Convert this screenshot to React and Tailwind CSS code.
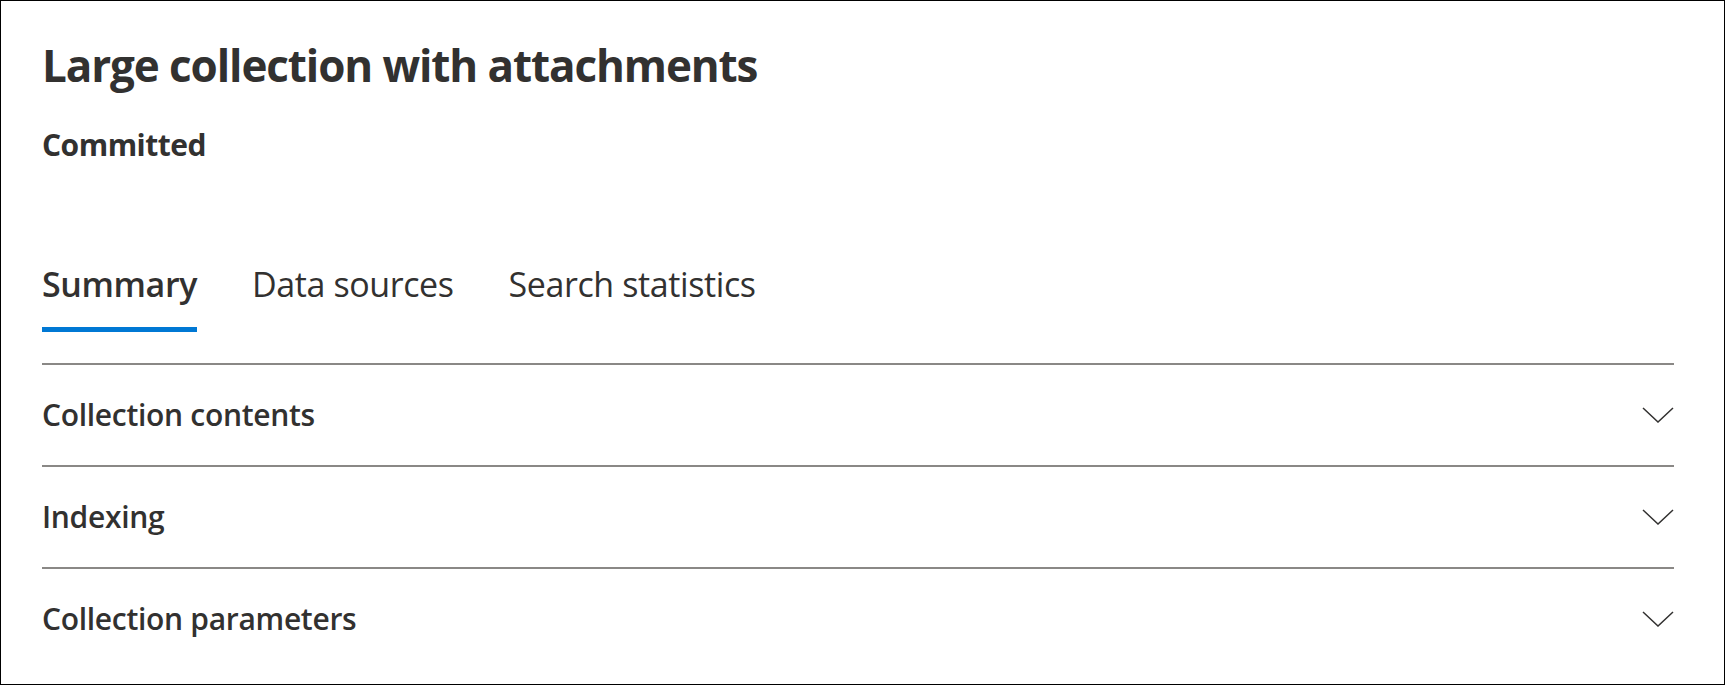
const font = { fontFamily: '"Open Sans", "Noto Sans", sans-serif' };

const tabs = [
  { label: 'Summary', active: true },
  { label: 'Data sources' },
  { label: 'Search statistics' },
];

const sections = ['Collection contents', 'Indexing', 'Collection parameters'];

function Chevron() {
  return (
    <svg width="32" height="16" viewBox="0 0 32 16" fill="none" className="shrink-0">
      <path d="M1 1 L16 15 L31 1" stroke="#323130" strokeWidth="1.5" />
    </svg>
  );
}

export default function App() {
  return (
    <div
      className="w-[1725px] h-[685px] border border-black bg-white text-[#323130] pl-[41px] pr-[50px] pt-[36px] overflow-hidden"
      style={font}
    >
      <h1 className="text-[44px] leading-[56px] font-bold tracking-[-1.1px]">
        Large collection with attachments
      </h1>
      <div className="mt-[32px] text-[30px] leading-[40px] font-bold tracking-[-0.5px]">Committed</div>

      {/* Tabs */}
      <div className="mt-[97px] flex gap-[55px]">
        {tabs.map((t) => (
          <div key={t.label} className="flex flex-col">
            <span
              className={
                'text-[34px] leading-[44px] tracking-[-0.4px] ' +
                (t.active ? 'font-semibold' : 'font-normal')
              }
            >
              {t.label}
            </span>
            <div className={'mt-[21px] h-[5px] ' + (t.active ? 'bg-[#0078d4]' : 'bg-transparent')} />
          </div>
        ))}
      </div>

      {/* Accordion */}
      <div className="mt-[31px] border-t-2 border-[#8a8886]">
        {sections.map((s, i) => (
          <div
            key={s}
            className={
              'h-[100px] flex items-center justify-between ' +
              (i < sections.length - 1 ? 'border-b-2 border-[#8a8886] box-content' : '')
            }
          >
            <span className="text-[30px] leading-[40px] font-semibold tracking-[-0.3px]">{s}</span>
            <Chevron />
          </div>
        ))}
      </div>
    </div>
  );
}
